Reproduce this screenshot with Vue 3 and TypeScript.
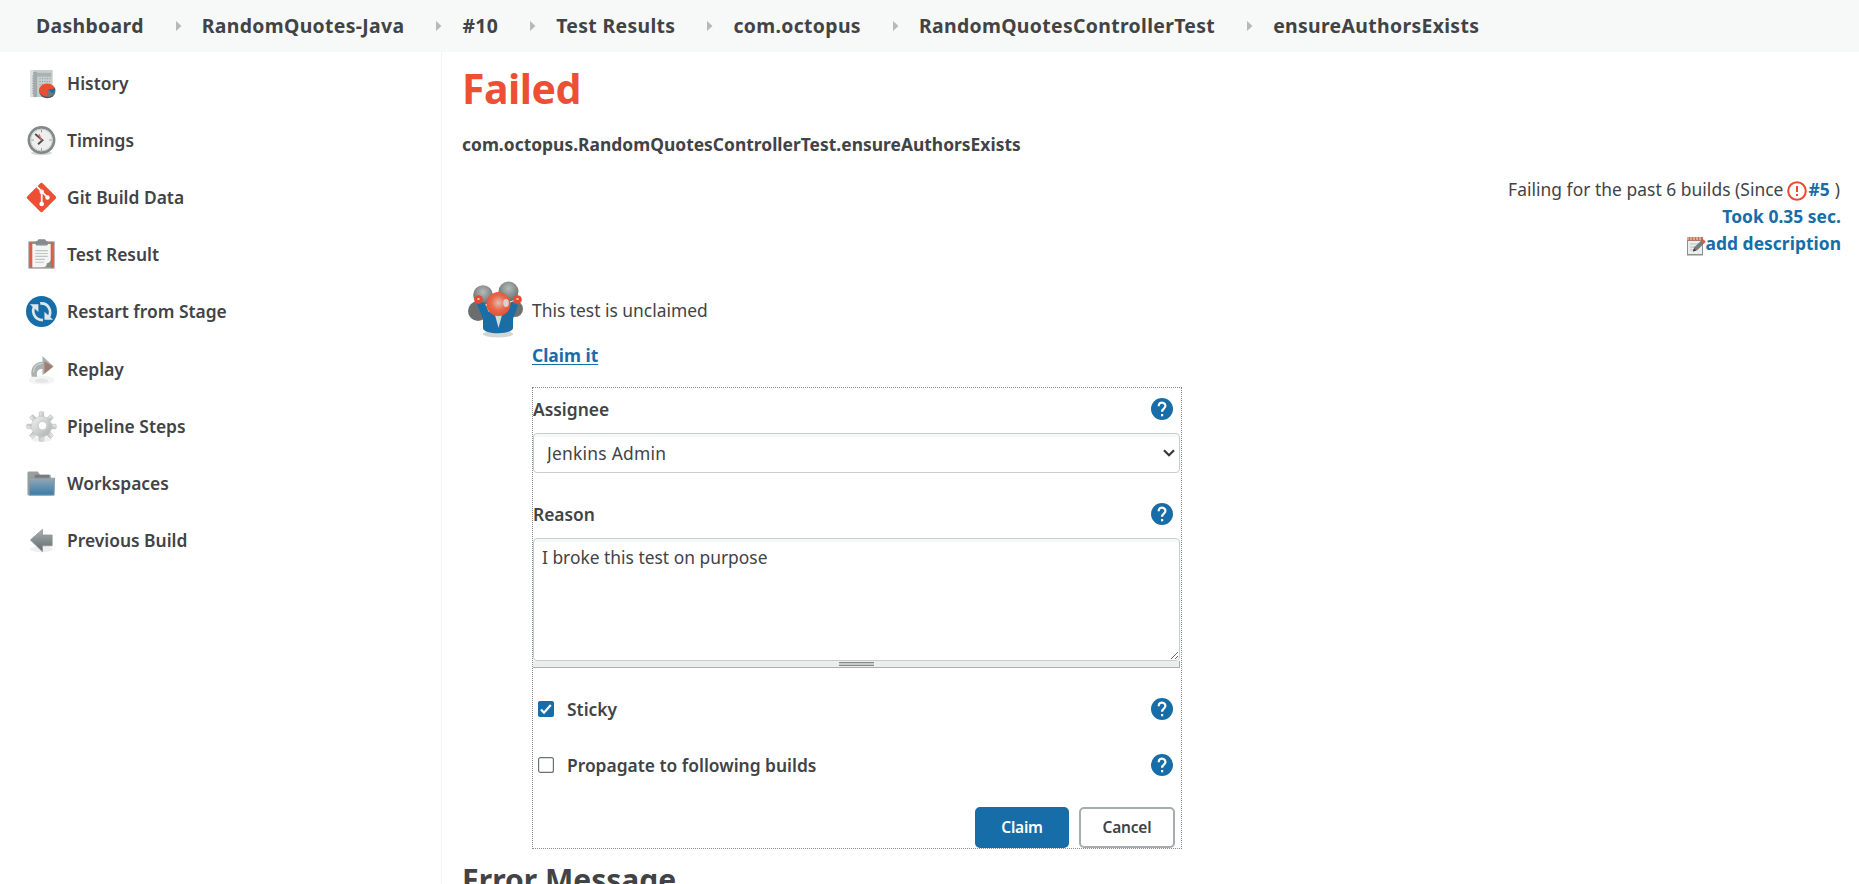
<script setup lang="ts">
import { ref } from 'vue'

type IconName =
  | 'history' | 'clock' | 'git' | 'clipboard' | 'restart'
  | 'replay' | 'gear' | 'folder' | 'previous'

interface Task {
  label: string
  icon: IconName
}

const crumbs: string[] = [
  'Dashboard',
  'RandomQuotes-Java',
  '#10',
  'Test Results',
  'com.octopus',
  'RandomQuotesControllerTest',
  'ensureAuthorsExists',
]

const tasks: Task[] = [
  { label: 'History', icon: 'history' },
  { label: 'Timings', icon: 'clock' },
  { label: 'Git Build Data', icon: 'git' },
  { label: 'Test Result', icon: 'clipboard' },
  { label: 'Restart from Stage', icon: 'restart' },
  { label: 'Replay', icon: 'replay' },
  { label: 'Pipeline Steps', icon: 'gear' },
  { label: 'Workspaces', icon: 'folder' },
  { label: 'Previous Build', icon: 'previous' },
]

const assignee = ref('Jenkins Admin')
const reason = ref('I broke this test on purpose')
const sticky = ref(true)
const propagate = ref(false)
const gearTeeth = [0, 45, 90, 135, 180, 225, 270, 315]
</script>

<template>
  <div class="page">
    <svg class="defs" width="0" height="0" aria-hidden="true">
      <defs>
        <linearGradient id="silver" x1="0" y1="0" x2="1" y2="1">
          <stop offset="0" stop-color="#f2f3f2" />
          <stop offset="1" stop-color="#a8afaf" />
        </linearGradient>
        <linearGradient id="steel" x1="0" y1="0" x2="0" y2="1">
          <stop offset="0" stop-color="#a9b1b2" />
          <stop offset="1" stop-color="#62686a" />
        </linearGradient>
        <linearGradient id="folderFront" x1="0" y1="0" x2="0" y2="1">
          <stop offset="0" stop-color="#96a8b2" />
          <stop offset="1" stop-color="#347cac" />
        </linearGradient>
        <radialGradient id="greyBall" cx=".5" cy=".35" r=".65">
          <stop offset="0" stop-color="#b5bbbb" />
          <stop offset="1" stop-color="#666a6a" />
        </radialGradient>
        <radialGradient id="redBall" cx=".5" cy=".45" r=".6">
          <stop offset="0" stop-color="#e5bdb2" />
          <stop offset=".5" stop-color="#e8694d" />
          <stop offset="1" stop-color="#e8492c" />
        </radialGradient>
        <symbol id="help" viewBox="0 0 22 22">
          <circle cx="11" cy="11" r="11" fill="#176da8" />
          <path d="M7.700 8.200V7.800a3.350 3.200 0 1 1 5.400 2.500c-1.300 1-2 1.600-2 3.500" fill="none" stroke="#fff" stroke-width="2.200" />
          <rect x="10" y="16" width="2.200" height="2.300" fill="#fff" />
        </symbol>
      </defs>
    </svg>

    <nav class="breadcrumbs">
      <template v-for="(crumb, i) in crumbs" :key="crumb">
        <svg v-if="i > 0" class="separator" viewBox="0 0 6 10"><path d="M0 0l5.5 5L0 10z" /></svg>
        <a class="crumb">{{ crumb }}</a>
      </template>
    </nav>

    <div class="body">
      <aside class="tasks">
        <a v-for="task in tasks" :key="task.label" class="task">
          <svg class="task-icon" viewBox="0 0 32 32">
            <g v-if="task.icon === 'history'">
              <path d="M4.500 2h23v28h-23z" fill="#c9cdcc" />
              <path d="M4.500 2h3v28h-3z" fill="#dfe1e0" />
              <path d="M7.500 4h4v26h-4z" fill="#a2abac" />
              <path d="M11 5h15v4H11z" fill="#aab3b4" />
              <path d="M14 11h12M14 14h12M14 17h5M7 8v19" stroke="#8d9696" stroke-dasharray="1 1.5" />
              <ellipse cx="22" cy="24.400" rx="8.300" ry="6.800" fill="#4b555c" />
              <ellipse cx="21.900" cy="22.800" rx="8.400" ry="6.800" fill="#e94f32" />
              <path d="M21.500 23h8.700c0 4-4 6.800-8 6.600z" fill="#70787c" />
              <path d="M23 22.500l7-1.500c.5 2.500-.5 4-2.500 5z" fill="#176da8" />
            </g>
            <g v-else-if="task.icon === 'clock'">
              <ellipse cx="16" cy="29" rx="11" ry="2.200" fill="#d7d9d9" />
              <circle cx="16" cy="15.500" r="13" fill="#edeeed" stroke="#818887" stroke-width="2.800" />
              <circle cx="16" cy="15.500" r="11.200" fill="none" stroke="#c4c9c8" />
              <path d="M9.500 9.300L17 15.700l-4.500 4.200" fill="none" stroke="#4a4f51" stroke-width="2" />
              <path d="M16 16L13.400 9.500" stroke="#df6b55" stroke-width="1.400" />
              <path d="M16 5v2.500M16 24v2.500M5.500 15.500H8M24 15.500h2.500" stroke="#8d9493" />
            </g>
            <g v-else-if="task.icon === 'git'">
              <rect x="4.700" y="4.700" width="22.600" height="22.600" rx="2" transform="rotate(45 16 16)" fill="#ed4f35" />
              <path d="M11 4.500l5.200 5.100v12.800M16.200 9.800l6 6" fill="none" stroke="#fff" stroke-width="1.800" />
              <g fill="#fff"><circle cx="16.200" cy="10" r="2.300" /><circle cx="16.200" cy="22.700" r="2.400" /><circle cx="22.200" cy="16" r="2.300" /></g>
            </g>
            <g v-else-if="task.icon === 'clipboard'">
              <path d="M2.500 2.500h27v28h-27z" fill="#8c8989" />
              <path d="M4.200 4h23.600v25H4.200z" fill="#e5593f" />
              <path d="M6.500 5h19v24.300h-19z" fill="#f3f4f3" />
              <path d="M9.500 12h13M9.500 15h13M9.500 18h13M9.500 21h10M9.500 24h9" stroke="#c0c5c4" stroke-width="1.200" />
              <path d="M25.800 21v8.500H17c4-.5 4.500-2.500 4.500-4.500 1.800 0 3.800-1 4.300-4z" fill="#858b8a" />
              <path d="M10 6V3.500c0-1 .5-1.500 1.500-1.500l1.500-1.700h6.500L21 2c1 0 1.500.5 1.500 1.500V6c0 1.500-12.500 1.500-12.500 0z" fill="#838b8d" />
              <path d="M11 6.500h10.500" stroke="#bfc5c5" />
            </g>
            <g v-else-if="task.icon === 'restart'">
              <circle cx="16" cy="16" r="16" fill="#176da8" />
              <path d="M9.300 9.800C5.500 15 7.500 24.500 17.500 25M14.700 7.700C23.500 7 27.500 16 23 22.500" fill="none" stroke="#dfe7ea" stroke-width="2.800" />
              <path d="M4 8.500h8.800v8z" fill="#dfe7ea" />
              <path d="M28 24.500h-9v-8.300z" fill="#dfe7ea" />
            </g>
            <g v-else-if="task.icon === 'replay'">
              <ellipse cx="16" cy="27" rx="13.500" ry="4.500" fill="#f3f5f4" />
              <ellipse cx="16" cy="27.500" rx="7" ry="2.200" fill="#e3e6e5" />
              <path d="M5.800 23.500C4 13 9.500 8.500 17 8V2l11.500 11L17 22v-6.500c-5 0-6.500 2.500-5.500 8z" fill="#a9b1b1" />
              <path d="M7.800 19c.2-6.500 4.200-9 9.200-9.300" fill="none" stroke="#cdd2d1" stroke-width="1.500" />
              <path d="M19 7.500l9 5.500-9 7.500z" fill="#a27c73" />
            </g>
            <g v-else-if="task.icon === 'gear'">
              <ellipse cx="16" cy="29" rx="11" ry="3" fill="#f0f1f1" />
              <g fill="url(#silver)" stroke="#b7bdbc" stroke-width=".7">
                <rect v-for="angle in gearTeeth" :key="angle" x="13.700" y=".8" width="4.600" height="7" rx="1" :transform="`rotate(${angle} 16 16)`" />
              </g>
              <circle cx="16" cy="16" r="10.500" fill="url(#silver)" stroke="#c0c5c4" stroke-width=".6" />
              <circle cx="17" cy="15" r="4.500" fill="#fff" stroke="#ced2d1" stroke-width="1.500" />
            </g>
            <g v-else-if="task.icon === 'folder'">
              <path d="M1.500 28V5.500C1.500 4 2 3.500 3.500 3.500H12L14.500 7H24c1 0 1.500.5 1.500 1.500V28z" fill="#969e9e" />
              <path d="M9 7h15v4H9z" fill="#747c7d" />
              <path d="M3.200 10.500h26.300l-.5 17.500H3.200z" fill="url(#folderFront)" stroke="#929b9d" />
            </g>
            <g v-else>
              <ellipse cx="16" cy="25" rx="12" ry="3" fill="#eef0ef" />
              <path d="M4.500 15.500L17 4.500v5.800h10v11.200H17v6z" fill="url(#steel)" stroke="#8f9695" stroke-width=".8" />
            </g>
          </svg>
          <span>{{ task.label }}</span>
        </a>
      </aside>

      <main class="content">
        <h1 class="status">Failed</h1>
        <p class="test-name">com.octopus.RandomQuotesControllerTest.ensureAuthorsExists</p>

        <div class="summary">
          <div class="summary-line">
            <span>Failing for the past 6 builds (Since</span>
            <svg class="failed-icon" viewBox="0 0 20 20">
              <circle cx="10" cy="10" r="8.800" fill="none" stroke="#e8492f" stroke-width="2" />
              <path d="M10 5v6M10 13v2" stroke="#e8492f" stroke-width="2" />
            </svg>
            <a class="link">#5</a>
            <span class="paren">)</span>
          </div>
          <div class="summary-line"><a class="link">Took 0.35 sec.</a></div>
          <div class="summary-line">
            <svg class="note-icon" viewBox="0 0 20 20">
              <path d="M1 2h16v17.500H1z" fill="#8b9090" />
              <path d="M2 5h14v13H2z" fill="#eceeee" />
              <path d="M1 1h16v3.500H1z" fill="#d9654f" />
              <path d="M2 1v3M5 1v3M8 1v3M11 1v3M14 1v3" stroke="#fff" stroke-width=".8" />
              <path d="M4 8h9M4 11h7M4 14h5" stroke="#b8bebe" />
              <path d="M7 15.500l1.200-4.200 8-7.500 3 2.500-8 8z" fill="#777c7b" />
              <path d="M15 4.800L16.800 3l3 2.500L18 7.300z" fill="#e45b43" />
              <path d="M7 15.500l1-3 2 2z" fill="#333" />
            </svg>
            <a class="link">add description</a>
          </div>
        </div>

        <section class="claim">
          <svg class="claim-icon" viewBox="0 0 56 58">
            <ellipse cx="30" cy="53" rx="15" ry="3.500" fill="#d3d6d6" />
            <circle cx="10" cy="30" r="10" fill="#6a6e6e" />
            <circle cx="47" cy="28" r="8" fill="#6c7171" />
            <circle cx="15" cy="14" r="9.800" fill="url(#greyBall)" />
            <circle cx="40.500" cy="10.500" r="10" fill="url(#greyBall)" />
            <path d="M9 23l7-2 4 9 10 6 10-6 3-9 7 3-5 14v9c0 7-30 7-30 0v-9z" fill="#1b6da5" />
            <path d="M27 34h7l-3.500 13z" fill="#d3d9da" />
            <circle cx="30.500" cy="23" r="12" fill="url(#redBall)" />
            <ellipse cx="38" cy="22" rx="2.800" ry="4" fill="#d6d2d0" />
            <circle cx="10.500" cy="18.500" r="4.300" fill="#e8492f" />
            <circle cx="49.500" cy="18.500" r="4.300" fill="#e8492f" />
            <path d="M9.500 18h2M48.500 18h2" stroke="#eac6be" stroke-width="2" />
          </svg>

          <div class="claim-main">
            <p class="claim-text">This test is unclaimed</p>
            <a class="claim-link">Claim it</a>

            <form class="claim-form" @submit.prevent>
              <div class="row">
                <label for="assignee">Assignee</label>
                <svg class="help"><use href="#help" /></svg>
              </div>
              <div class="select-wrap">
                <select id="assignee" v-model="assignee" class="control">
                  <option>Jenkins Admin</option>
                </select>
                <svg class="chevron" viewBox="0 0 12 8"><path d="M1 1.300l5 5 5-5" /></svg>
              </div>

              <div class="row reason-row">
                <label for="reason">Reason</label>
                <svg class="help"><use href="#help" /></svg>
              </div>
              <textarea id="reason" v-model="reason" class="control" spellcheck="false"></textarea>
              <div class="handle"><span class="grip"></span></div>

              <div class="row sticky-row">
                <label class="check">
                  <input v-model="sticky" type="checkbox" />
                  <svg class="box" viewBox="0 0 16 16">
                    <rect v-if="sticky" width="16" height="16" rx="2" fill="#176da8" />
                    <path v-if="sticky" d="M3 8.500l3 3.200L12.800 4" fill="none" stroke="#fff" stroke-width="2.200" />
                    <rect v-else x=".6" y=".6" width="14.800" height="14.800" rx="2" fill="#fff" stroke="#6d7272" stroke-width="1.200" />
                  </svg>
                  <span>Sticky</span>
                </label>
                <svg class="help"><use href="#help" /></svg>
              </div>
              <div class="row propagate-row">
                <label class="check">
                  <input v-model="propagate" type="checkbox" />
                  <svg class="box" viewBox="0 0 16 16">
                    <rect v-if="propagate" width="16" height="16" rx="2" fill="#176da8" />
                    <path v-if="propagate" d="M3 8.500l3 3.200L12.800 4" fill="none" stroke="#fff" stroke-width="2.200" />
                    <rect v-else x=".6" y=".6" width="14.800" height="14.800" rx="2" fill="#fff" stroke="#6d7272" stroke-width="1.200" />
                  </svg>
                  <span>Propagate to following builds</span>
                </label>
                <svg class="help"><use href="#help" /></svg>
              </div>

              <div class="actions">
                <button class="button primary" type="submit">Claim</button>
                <button class="button" type="button">Cancel</button>
              </div>
            </form>
          </div>
        </section>

        <h2 class="error-title">Error Message</h2>
      </main>
    </div>
  </div>
</template>

<style>
html,
body {
  overflow: hidden;
  background: #fff;
}
</style>

<style scoped>
.page {
  height: 884px;
  overflow: hidden;
  color: #414346;
  font: 17.4px/27px "Noto Sans", "Open Sans", sans-serif;
}
.page * {
  box-sizing: border-box;
}
.defs {
  position: absolute;
}
.breadcrumbs {
  display: flex;
  align-items: center;
  height: 52px;
  padding-left: 36px;
  background: #f7f9f8;
  font-size: 19.4px;
  font-weight: 700;
  letter-spacing: 0.34px;
  white-space: nowrap;
}
.crumb {
  margin-top: -2px;
}
.separator {
  flex: none;
  width: 6px;
  height: 10px;
  margin: 0 20px 0 32px;
  fill: #b4baba;
}
.body {
  display: flex;
  height: 832px;
}
.tasks {
  flex: none;
  display: flex;
  flex-direction: column;
  width: 442px;
  padding: 3px 0 0 26px;
  border-right: 1px solid #f3f5f4;
}
.task {
  display: flex;
  align-items: center;
  gap: 10px;
  height: 57.1px;
  font-weight: 600;
}
.task-icon {
  width: 31px;
  height: 31px;
}
.content {
  flex: 1;
  padding: 0 18px 0 20px;
}
.status {
  height: 72px;
  margin: 0;
  color: #ed4f35;
  font-size: 41px;
  font-weight: 700;
  letter-spacing: -0.5px;
  line-height: 72px;
}
.test-name {
  height: 40px;
  margin: 0;
  font-weight: 700;
  letter-spacing: 0.02px;
  line-height: 40px;
}
.summary {
  display: flex;
  flex-direction: column;
  align-items: flex-end;
  padding-top: 12px;
  letter-spacing: 0.04px;
}
.summary-line {
  display: flex;
  align-items: center;
  height: 27px;
}
.failed-icon {
  width: 20px;
  height: 20px;
  margin: 2px 1px 0 4px;
}
.note-icon {
  width: 20px;
  height: 20px;
  margin-top: 5px;
}
.link {
  color: #176da8;
  font-weight: 700;
}
.paren {
  margin: 0 1px 0 5px;
}
.claim {
  display: flex;
  padding: 24px 0 0 6px;
}
.claim-icon {
  flex: none;
  width: 56px;
  height: 58px;
}
.claim-main {
  width: 650px;
  margin-left: 8px;
  padding-top: 16px;
}
.claim-text {
  margin: 0 0 18px;
}
.claim-link {
  display: block;
  width: max-content;
  margin-bottom: 18px;
  color: #176da8;
  font-weight: 700;
  text-decoration: underline;
  text-underline-offset: 2px;
}
.claim-form {
  display: flex;
  flex-direction: column;
  width: 650px;
  height: 462px;
  border: 1px dotted #858d8d;
}
.row {
  display: flex;
  align-items: center;
  justify-content: space-between;
  height: 42px;
  padding-right: 8px;
  font-weight: 600;
}
.help {
  width: 22px;
  height: 22px;
}
.select-wrap {
  position: relative;
  display: flex;
  margin-top: 3px;
}
.control {
  display: block;
  width: 647px;
  margin: 0;
  border: 1px solid #c8cdcc;
  border-radius: 4px;
  outline: none;
  background: #fff;
  box-shadow: inset 0 3px 0 #f7f9f8;
  color: #414346;
  font: inherit;
  appearance: none;
}
select.control {
  height: 40px;
  padding: 0 36px 0 13px;
  letter-spacing: 0.25px;
}
.chevron {
  position: absolute;
  top: 16px;
  right: 6px;
  width: 12px;
  height: 8px;
  fill: none;
  stroke: #36383a;
  stroke-width: 2.2;
  pointer-events: none;
}
.reason-row {
  margin-top: 20px;
}
textarea.control {
  height: 123px;
  margin-top: 3px;
  padding: 5px 8px;
  resize: vertical;
}
.handle {
  display: flex;
  justify-content: center;
  width: 647px;
  height: 7px;
  padding-top: 1px;
  border: solid #a9b0b0;
  border-width: 0 1px 1px 0;
  background: #eceeed;
}
.grip {
  width: 35px;
  height: 4px;
  border: solid #868a87;
  border-width: 1px 0;
  background: #c9ccca;
}
.sticky-row {
  margin-top: 20px;
}
.propagate-row {
  margin-top: 14px;
}
.check {
  display: flex;
  align-items: center;
  padding-left: 5px;
}
.check input {
  position: absolute;
  opacity: 0;
}
.box {
  width: 16px;
  height: 16px;
  margin-right: 13px;
}
.actions {
  display: flex;
  justify-content: flex-end;
  gap: 10px;
  margin-top: 21px;
  padding-right: 6px;
}
.button {
  width: 96px;
  height: 41px;
  padding: 0 0 2px;
  border: 2px solid #a6adae;
  border-radius: 5px;
  background: #fff;
  color: #414346;
  font: 600 15.5px "Noto Sans", "Open Sans", sans-serif;
  letter-spacing: -0.2px;
}
.primary {
  width: 94px;
  border-color: #176da8;
  background: #176da8;
  color: #fff;
}
.error-title {
  margin: 10px 0 0;
  font-size: 30px;
  font-weight: 700;
  line-height: 42px;
}
</style>
